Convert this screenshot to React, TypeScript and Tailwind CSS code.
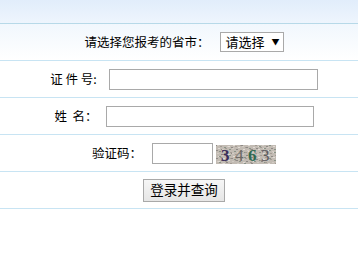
import React from 'react'

const font = { fontFamily: '"Noto Sans CJK SC", "Liberation Sans", sans-serif' }

function Captcha() {
    const dots = []
    for (let i = 0; i < 160; i++) {
        const x = (i * 37) % 60
        const y = (i * 13 + (i % 7) * 3) % 19
        const c = ['#8f8a86', '#e0dad4', '#a49c94', '#d2ccc4', '#8a9488'][i % 5]
        dots.push(<rect key={i} x={x} y={y} width="2" height="1" fill={c} />)
    }
    return (
        <svg width="60" height="19" viewBox="0 0 60 19" className="block">
            <rect width="60" height="19" fill="#c2bbb3" />
            {dots}
            <text x="5" y="16" fontSize="17" fontWeight="bold" fontFamily="Liberation Serif, serif" fill="#3d2f5a">3</text>
            <text x="19" y="16" fontSize="17" fontFamily="Liberation Serif, serif" fill="#6e6a66">4</text>
            <text x="32" y="16" fontSize="17" fontWeight="bold" fontFamily="Liberation Serif, serif" fill="#2e6a52">6</text>
            <text x="45" y="16" fontSize="17" fontFamily="Liberation Serif, serif" fill="#5d5a60">3</text>
        </svg>
    )
}

export default function App() {
    return (
        <div className="w-[358px] h-[258px] bg-white text-black text-[12.5px] overflow-hidden" style={font}>
            <div className="h-[24px] bg-gradient-to-b from-[#e1edfb] to-[#eef5fd] border-b border-[#b7d9e8]" />
            <div className="w-[368px]">
                <div className="h-[37px] flex items-center justify-center border-b border-[#c8e4f3] bg-gradient-to-b from-[#f1f7fd] to-white">
                    <span>请选择您报考的省市：</span>
                    <div className="ml-[10px] w-[64px] h-[20px] border border-[#a9a9a9] bg-white flex items-center pl-[5px] text-[13px]">
                        <span>请选择</span>
                        <span className="ml-[7px] text-[8px]">▼</span>
                    </div>
                </div>
                <div className="h-[37px] flex items-center justify-center border-b border-[#c8e4f3]">
                    <span className="whitespace-pre">证 件 号:</span>
                    <input className="ml-[12px] w-[209px] h-[21px] border border-[#a9a9a9] bg-white outline-none" />
                </div>
                <div className="h-[37px] flex items-center justify-center border-b border-[#c8e4f3]">
                    <span className="whitespace-pre">姓  名：</span>
                    <input className="ml-[8px] w-[208px] h-[21px] border border-[#a9a9a9] bg-white outline-none" />
                </div>
                <div className="h-[37px] flex items-center justify-center border-b border-[#c8e4f3]">
                    <span>验证码：</span>
                    <input className="ml-[10px] w-[61px] h-[21px] border border-[#a9a9a9] bg-white outline-none" />
                    <div className="ml-[3px] mt-[3px]">
                        <Captcha />
                    </div>
                </div>
                <div className="h-[37px] flex items-center justify-center border-b border-[#c8e4f3]">
                    <button className="w-[82px] h-[23px] border border-[#a9a9a9] bg-gradient-to-b from-[#f6f6f6] to-[#e6e6e6] text-[13.5px] leading-none">
                        登录并查询
                    </button>
                </div>
            </div>
        </div>
    )
}
